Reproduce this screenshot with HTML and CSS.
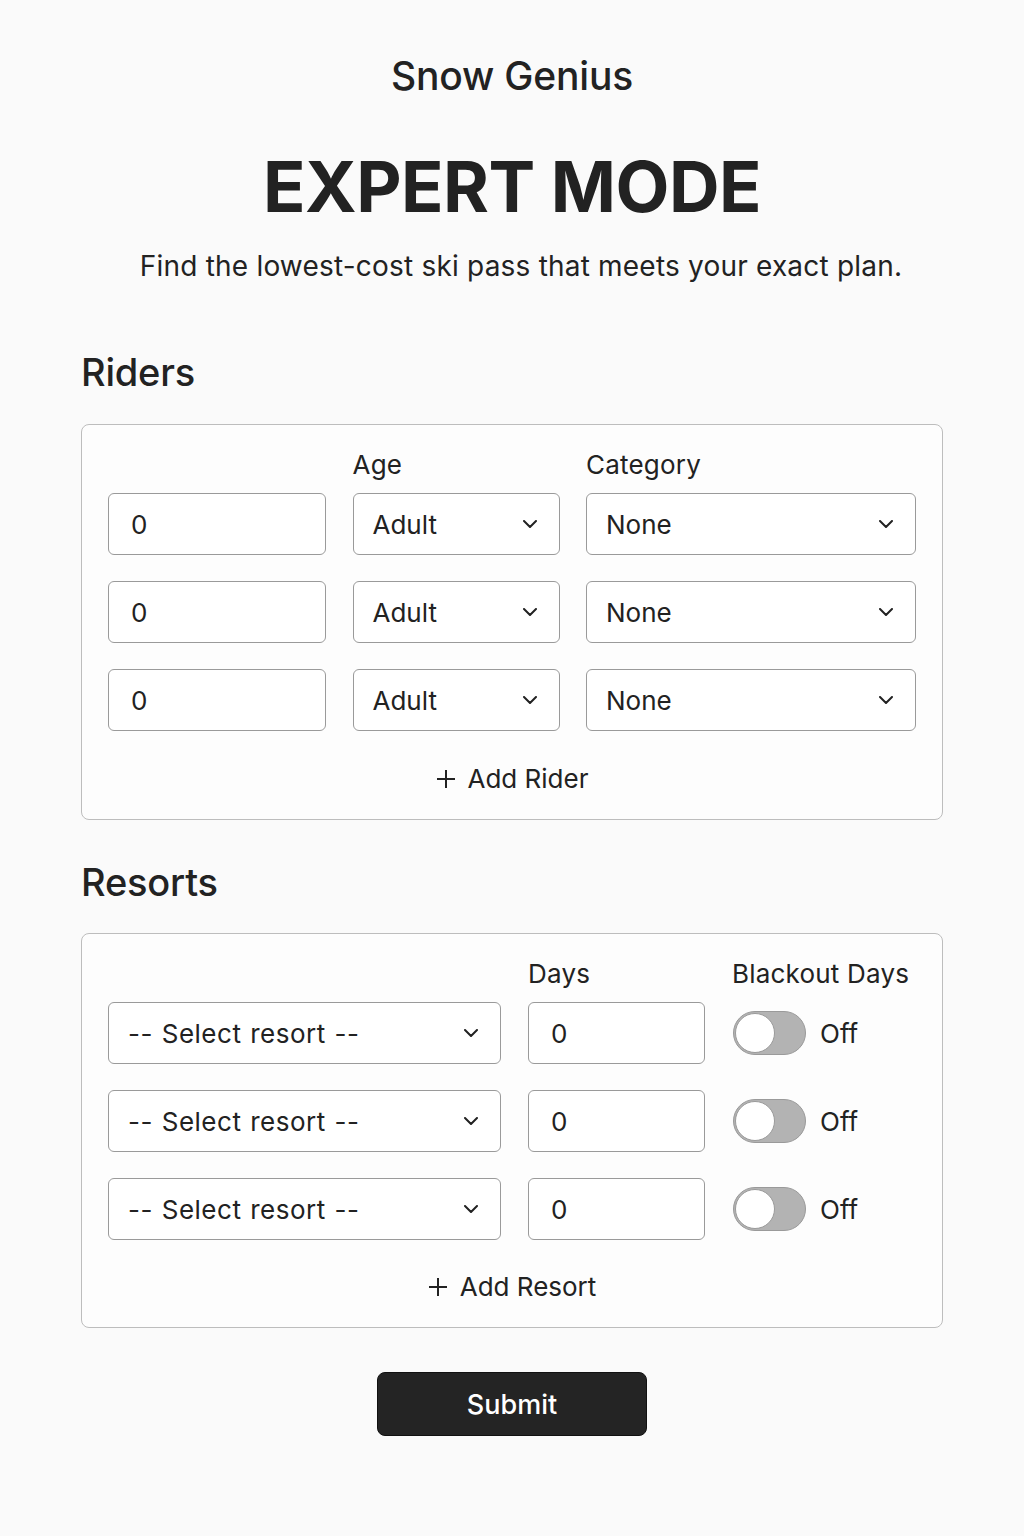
FILE: index.html
```html
<!DOCTYPE html>
<html lang="en">
<head>
<meta charset="utf-8">
<title>Snow Genius - Expert Mode</title>
<link rel="stylesheet" href="styles.css">
</head>
<body>
<main class="page">
  <header class="header">
    <div class="brand">Snow Genius</div>
    <h1 class="title">EXPERT MODE</h1>
    <p class="subtitle">Find the lowest-cost ski pass that meets your exact plan.</p>
  </header>

  <h2 class="section-title">Riders</h2>
  <section class="card">
    <div class="grid riders-grid">
      <div class="label"></div>
      <div class="label">Age</div>
      <div class="label">Category</div>

      <div class="field">0</div>
      <div class="field select"><span>Adult</span><svg class="chev" viewBox="0 0 14 8" width="14" height="8"><path d="M1 1l6 6 6-6" fill="none" stroke="#222" stroke-width="2" stroke-linecap="round" stroke-linejoin="round"/></svg></div>
      <div class="field select"><span>None</span><svg class="chev" viewBox="0 0 14 8" width="14" height="8"><path d="M1 1l6 6 6-6" fill="none" stroke="#222" stroke-width="2" stroke-linecap="round" stroke-linejoin="round"/></svg></div>

      <div class="field">0</div>
      <div class="field select"><span>Adult</span><svg class="chev" viewBox="0 0 14 8" width="14" height="8"><path d="M1 1l6 6 6-6" fill="none" stroke="#222" stroke-width="2" stroke-linecap="round" stroke-linejoin="round"/></svg></div>
      <div class="field select"><span>None</span><svg class="chev" viewBox="0 0 14 8" width="14" height="8"><path d="M1 1l6 6 6-6" fill="none" stroke="#222" stroke-width="2" stroke-linecap="round" stroke-linejoin="round"/></svg></div>

      <div class="field">0</div>
      <div class="field select"><span>Adult</span><svg class="chev" viewBox="0 0 14 8" width="14" height="8"><path d="M1 1l6 6 6-6" fill="none" stroke="#222" stroke-width="2" stroke-linecap="round" stroke-linejoin="round"/></svg></div>
      <div class="field select"><span>None</span><svg class="chev" viewBox="0 0 14 8" width="14" height="8"><path d="M1 1l6 6 6-6" fill="none" stroke="#222" stroke-width="2" stroke-linecap="round" stroke-linejoin="round"/></svg></div>
    </div>
    <div class="add"><svg class="plus" viewBox="0 0 20 20" width="20" height="20"><path d="M10 1v18M1 10h18" stroke="#222" stroke-width="2"/></svg><span>Add Rider</span></div>
  </section>

  <h2 class="section-title resorts-title">Resorts</h2>
  <section class="card">
    <div class="grid resorts-grid">
      <div class="label"></div>
      <div class="label">Days</div>
      <div class="label">Blackout Days</div>

      <div class="field select"><span class="resort-text">-- Select resort --</span><svg class="chev" viewBox="0 0 14 8" width="14" height="8"><path d="M1 1l6 6 6-6" fill="none" stroke="#222" stroke-width="2" stroke-linecap="round" stroke-linejoin="round"/></svg></div>
      <div class="field">0</div>
      <div class="toggle-wrap"><div class="toggle"><div class="knob"></div></div><span>Off</span></div>

      <div class="field select"><span class="resort-text">-- Select resort --</span><svg class="chev" viewBox="0 0 14 8" width="14" height="8"><path d="M1 1l6 6 6-6" fill="none" stroke="#222" stroke-width="2" stroke-linecap="round" stroke-linejoin="round"/></svg></div>
      <div class="field">0</div>
      <div class="toggle-wrap"><div class="toggle"><div class="knob"></div></div><span>Off</span></div>

      <div class="field select"><span class="resort-text">-- Select resort --</span><svg class="chev" viewBox="0 0 14 8" width="14" height="8"><path d="M1 1l6 6 6-6" fill="none" stroke="#222" stroke-width="2" stroke-linecap="round" stroke-linejoin="round"/></svg></div>
      <div class="field">0</div>
      <div class="toggle-wrap"><div class="toggle"><div class="knob"></div></div><span>Off</span></div>
    </div>
    <div class="add add-resort"><svg class="plus" viewBox="0 0 20 20" width="20" height="20"><path d="M10 1v18M1 10h18" stroke="#222" stroke-width="2"/></svg><span>Add Resort</span></div>
  </section>

  <div class="submit-row"><button class="submit" type="button">Submit</button></div>
</main>
</body>
</html>
```

FILE: styles.css
```css
* { box-sizing: border-box; }

body {
  margin: 0;
  background: #fafafa;
  color: #222;
  font-family: Inter, "Noto Sans", "Liberation Sans", sans-serif;
}

.page {
  width: 862px;
  margin: 0 auto;
  padding-top: 53px;
  padding-bottom: 60px;
}

.header { text-align: center; }

.brand {
  font-size: 39px;
  font-weight: 500;
  line-height: 46px;
  letter-spacing: -0.2px;
}

.title {
  margin: 45px 0 0;
  font-size: 70px;
  font-weight: 700;
  line-height: 86px;
  letter-spacing: -0.5px;
}

.subtitle {
  margin: 19px 0 0;
  padding-left: 18px;
  font-size: 28px;
  line-height: 34px;
  letter-spacing: 0.2px;
}

.section-title {
  margin: 67px 0 30px;
  font-size: 38px;
  font-weight: 500;
  line-height: 44px;
  letter-spacing: -0.2px;
}

.resorts-title { margin-top: 40px; margin-bottom: 29px; }

.card {
  border: 1px solid #bdbdbd;
  border-radius: 8px;
  background: #fdfdfd;
  padding: 25px 26px 25px;
}

.grid {
  display: grid;
  row-gap: 26px;
  column-gap: 27px;
  align-items: center;
}

.riders-grid { grid-template-columns: 218px 207px 1fr; column-gap: 26.5px; }
.resorts-grid { grid-template-columns: 393px 177px 1fr; }

.label {
  font-size: 26px;
  line-height: 30px;
  letter-spacing: 0.2px;
  margin-bottom: -13px;
}

.field {
  height: 62px;
  border: 1px solid #9a9a9a;
  border-radius: 6px;
  background: #fff;
  font-size: 26px;
  padding: 0 22px;
  display: flex;
  align-items: center;
}

.select { justify-content: space-between; padding-left: 19px; padding-right: 22px; }
.resort-text { letter-spacing: 0.5px; word-spacing: 1px; }
.chev { flex: none; }

.add {
  margin-top: 33px;
  display: flex;
  align-items: center;
  justify-content: center;
  gap: 12px;
  font-size: 26px;
  line-height: 30px;
}

.add-resort { margin-top: 32px; }
.plus { flex: none; }

.toggle-wrap {
  display: flex;
  align-items: center;
  gap: 14px;
  font-size: 26px;
  padding-left: 1px;
}

.toggle {
  width: 73px;
  height: 44px;
  border-radius: 22px;
  background: #b3b3b3;
  border: 1px solid #9a9a9a;
  padding: 1px;
  display: flex;
  align-items: center;
}

.knob {
  width: 40px;
  height: 40px;
  border-radius: 50%;
  background: #fff;
  border: 1px solid #9a9a9a;
}

.submit-row {
  display: flex;
  justify-content: center;
  margin-top: 44px;
}

.submit {
  width: 270px;
  height: 64px;
  border: 1px solid #111;
  border-radius: 8px;
  background: #242424;
  color: #fff;
  font-family: Inter, "Noto Sans", "Liberation Sans", sans-serif;
  font-size: 27px;
  font-weight: 500;
}
```
